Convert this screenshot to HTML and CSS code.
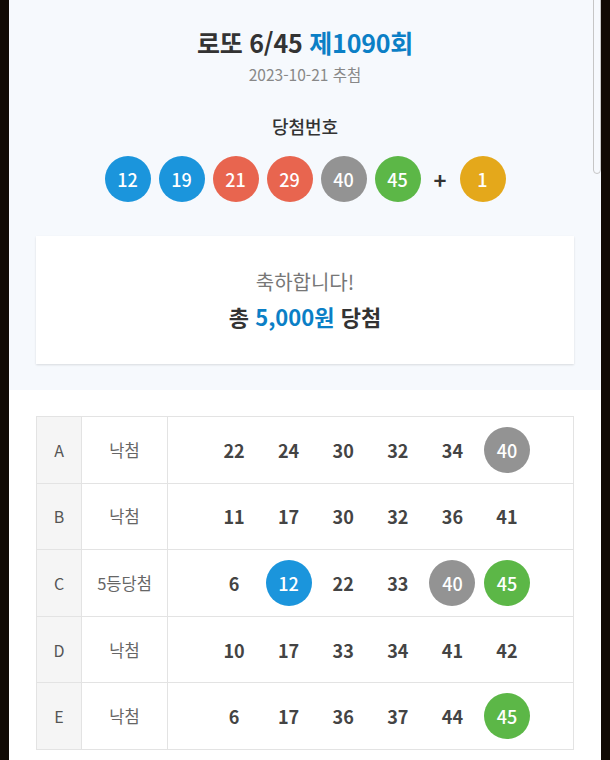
FILE: index.html
```html
<!DOCTYPE html>
<html lang="ko">
<head>
<meta charset="utf-8">
<title>로또 6/45 제1090회</title>
<link rel="stylesheet" href="styles.css">
</head>
<body>
<div class="frame">
  <section class="top">
    <h1 class="title">로또 6/45 <span class="blue">제1090회</span></h1>
    <div class="date">2023-10-21 추첨</div>
    <div class="label">당첨번호</div>
    <div class="balls">
      <span class="ball b-blue">12</span>
      <span class="ball b-blue">19</span>
      <span class="ball b-red">21</span>
      <span class="ball b-red">29</span>
      <span class="ball b-gray">40</span>
      <span class="ball b-green">45</span>
      <span class="plus">+</span>
      <span class="ball b-yellow">1</span>
    </div>
    <div class="card">
      <div class="congrats">축하합니다!</div>
      <div class="prize">총 <span class="blue">5,000원</span> 당첨</div>
    </div>
  </section>
  <section class="results">
    <table class="grid">
      <tr>
        <td class="c-key">A</td>
        <td class="c-res">낙첨</td>
        <td class="c-nums"><div class="nums"><span class="n">22</span><span class="n">24</span><span class="n">30</span><span class="n">32</span><span class="n">34</span><span class="n ball b-gray">40</span></div></td>
      </tr>
      <tr>
        <td class="c-key">B</td>
        <td class="c-res">낙첨</td>
        <td class="c-nums"><div class="nums"><span class="n">11</span><span class="n">17</span><span class="n">30</span><span class="n">32</span><span class="n">36</span><span class="n">41</span></div></td>
      </tr>
      <tr>
        <td class="c-key">C</td>
        <td class="c-res">5등당첨</td>
        <td class="c-nums"><div class="nums"><span class="n">6</span><span class="n ball b-blue">12</span><span class="n">22</span><span class="n">33</span><span class="n ball b-gray">40</span><span class="n ball b-green">45</span></div></td>
      </tr>
      <tr>
        <td class="c-key">D</td>
        <td class="c-res">낙첨</td>
        <td class="c-nums"><div class="nums"><span class="n">10</span><span class="n">17</span><span class="n">33</span><span class="n">34</span><span class="n">41</span><span class="n">42</span></div></td>
      </tr>
      <tr>
        <td class="c-key">E</td>
        <td class="c-res">낙첨</td>
        <td class="c-nums"><div class="nums"><span class="n">6</span><span class="n">17</span><span class="n">36</span><span class="n">37</span><span class="n">44</span><span class="n ball b-green">45</span></div></td>
      </tr>
    </table>
  </section>
  <div class="scroll"></div>
</div>
</body>
</html>
```
FILE: styles.css
```css
html, body {
  margin: 0;
  padding: 0;
  background: #110a04;
  height: 760px;
  overflow: hidden;
}
body {
  font-family: "Noto Sans CJK KR", "Noto Sans", sans-serif;
  color: #333;
}
.frame {
  position: relative;
  margin: 0 9px;
  width: 592px;
  height: 760px;
  background: #fff;
  overflow: hidden;
}
.blue { color: #0b7fc6; }
.top {
  background: #f6f9fd;
  padding: 27px 27px 26px;
  text-align: center;
}
.title {
  margin: 0;
  font-size: 25px;
  line-height: 30px;
  font-weight: 700;
  color: #333;
  letter-spacing: -0.2px;
}
.date {
  margin-top: 7px;
  font-size: 15.5px;
  line-height: 20px;
  color: #888;
}
.label {
  margin-top: 30px;
  font-size: 18px;
  line-height: 24px;
  font-weight: 500;
  color: #333;
}
.balls {
  margin-top: 18px;
  display: flex;
  justify-content: center;
  align-items: center;
  gap: 8px;
}
.ball {
  width: 46px;
  height: 46px;
  border-radius: 50%;
  display: inline-flex;
  align-items: center;
  justify-content: center;
  color: #fff;
  font-size: 18px;
  font-weight: 500;
}
.b-blue { background: #1b95dc; }
.b-red { background: #e8654f; }
.b-gray { background: #939393; }
.b-green { background: #5cb747; }
.b-yellow { background: #e4a81b; }
.plus {
  width: 23px;
  text-align: center;
  font-size: 22px;
  font-weight: 700;
  color: #333;
  line-height: 46px;
}
.card {
  margin-top: 34px;
  background: #fff;
  height: 128px;
  box-sizing: border-box;
  padding-top: 32px;
  box-shadow: 0 1px 2px rgba(0, 0, 0, 0.12);
}
.congrats {
  font-size: 20px;
  line-height: 28px;
  color: #777;
}
.prize {
  margin-top: 5px;
  font-size: 22px;
  line-height: 30px;
  font-weight: 700;
  color: #333;
}
.results {
  padding: 26px 27px 0;
}
.grid {
  width: 538px;
  border-collapse: collapse;
  table-layout: fixed;
}
.grid td {
  border: 1px solid #e3e3e3;
  height: 65.6px;
  padding: 0;
  text-align: center;
  vertical-align: middle;
}
.c-key {
  width: 44px;
  background: #f5f5f5;
  font-size: 16px;
  color: #555;
}
.c-res {
  width: 85px;
  font-size: 16.5px;
  color: #666;
}
.nums {
  display: flex;
  justify-content: center;
  align-items: center;
  gap: 8.6px;
}
.n {
  width: 46px;
  height: 46px;
  display: inline-flex;
  align-items: center;
  justify-content: center;
  font-size: 18px;
  font-weight: 700;
  color: #444;
}
.n.ball {
  color: #fff;
  font-weight: 500;
}
.scroll {
  position: absolute;
  left: 584px;
  top: -4px;
  width: 6px;
  height: 176px;
  border: 1px solid #c6c6c6;
  border-radius: 0 0 4px 4px;
}
```
